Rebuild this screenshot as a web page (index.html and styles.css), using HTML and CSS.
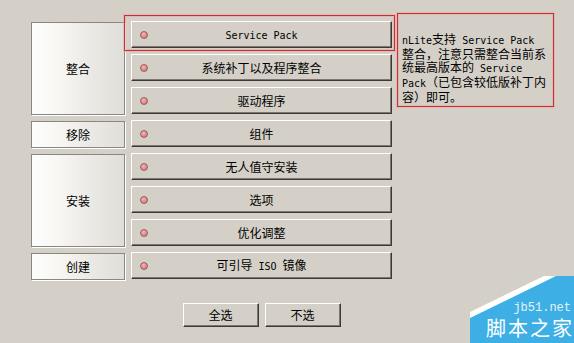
FILE: index.html
```html
<!DOCTYPE html>
<html lang="zh-CN">
<head>
<meta charset="utf-8">
<link rel="stylesheet" href="styles.css">
</head>
<body>
<div class="window">
  <div class="layout">
    <div class="grid">
      <div class="group g1">整合</div>
      <div class="btn r1"><span class="dot"></span><span class="lbl"><span class="m">Service Pack</span></span><span class="highlight"></span></div>
      <div class="btn r2"><span class="dot"></span><span class="lbl">系统补丁以及程序整合</span></div>
      <div class="btn r3"><span class="dot"></span><span class="lbl">驱动程序</span></div>
      <div class="group g2">移除</div>
      <div class="btn r4"><span class="dot"></span><span class="lbl">组件</span></div>
      <div class="group g3">安装</div>
      <div class="btn r5"><span class="dot"></span><span class="lbl">无人值守安装</span></div>
      <div class="btn r6"><span class="dot"></span><span class="lbl">选项</span></div>
      <div class="btn r7"><span class="dot"></span><span class="lbl">优化调整</span></div>
      <div class="group g4">创建</div>
      <div class="btn r8"><span class="dot"></span><span class="lbl">可引导<span class="m"> ISO </span>镜像</span></div>
      <div class="footer">
        <div class="fbtn">全选</div>
        <div class="fbtn">不选</div>
      </div>
    </div>
    <div class="info">
      <p class="info-text"><span class="m">nLite</span>支持<span class="m"> Service Pack</span><br>整合，注意只需整合当前系<br>统最高版本的<span class="m"> Service</span><br><span class="m">Pack</span>（已包含较低版补丁内<br>容）即可。</p>
    </div>
  </div>
  <div class="wm">
    <div class="wm-blue">
      <span class="wm-url">jb51.net</span>
      <span class="wm-name">脚本之家</span>
    </div>
  </div>
</div>
</body>
</html>
```
FILE: styles.css
```css
html, body {
  margin: 0;
  padding: 0;
}
body {
  background: #d4d0c8;
  font-family: "Noto Sans CJK SC", "Liberation Sans", sans-serif;
  font-size: 12px;
  color: #000;
}
.window {
  position: relative;
  width: 574px;
  height: 343px;
  overflow: hidden;
  background: #d4d0c8;
}
.layout {
  display: flex;
  align-items: flex-start;
  padding: 13px 0 0 31px;
}
.grid {
  margin-top: 8px;
  display: grid;
  grid-template-columns: 94px 261px;
  grid-template-rows: repeat(8, 27px) auto;
  column-gap: 6px;
  row-gap: 6px;
}
.m {
  font-family: "DejaVu Sans Mono", "Liberation Mono", monospace;
  font-size: 10px;
}
.group {
  grid-column: 1;
  margin: 1px 0 -1px 0;
  border: 1px solid #8a8680;
  box-shadow: 1px 1px 0 #ffffff;
  background: linear-gradient(90deg, #fdfdfc 0%, #f8f7f4 28%, #eeece8 55%, #e6e4df 80%, #e0ded8 100%);
  display: flex;
  align-items: center;
  justify-content: center;
  line-height: 14px;
}
.g1 { grid-row: 1 / 4; }
.g2 { grid-row: 4; }
.g3 { grid-row: 5 / 8; }
.g4 { grid-row: 8; }
.btn {
  grid-column: 2;
  position: relative;
  box-sizing: border-box;
  display: grid;
  grid-template-columns: 12px 1fr 12px;
  align-items: center;
  padding: 0 8px;
  background: #d4d0c8;
  border-top: 1px solid #ffffff;
  border-left: 1px solid #ffffff;
  border-right: 1px solid #3e3836;
  border-bottom: 1px solid #3e3836;
  box-shadow: inset -1px -1px 0 #7e7672;
  line-height: 14px;
}
.r1 { grid-row: 1; }
.r2 { grid-row: 2; }
.r3 { grid-row: 3; }
.r4 { grid-row: 4; }
.r5 { grid-row: 5; }
.r6 { grid-row: 6; }
.r7 { grid-row: 7; }
.r8 { grid-row: 8; }
.dot {
  grid-column: 1;
  width: 8px;
  height: 8px;
  border-radius: 50%;
  box-sizing: border-box;
  border: 1px solid #a45a5a;
  background: radial-gradient(circle at 40% 35%, #f0b8b6 0%, #d98d8c 55%, #c47372 100%);
}
.lbl {
  grid-column: 2;
  text-align: center;
  white-space: nowrap;
}
.highlight {
  position: absolute;
  left: -8px;
  top: -7px;
  right: -4px;
  bottom: -4px;
  border: 1px solid #b8383a;
  box-shadow: 0 0 0 1px rgba(240, 160, 160, 0.55), inset 0 0 0 1px rgba(240, 160, 160, 0.55);
  pointer-events: none;
}
.footer {
  grid-column: 2;
  grid-row: 9;
  margin-top: 18px;
  display: flex;
  justify-content: center;
  gap: 6px;
}
.fbtn {
  box-sizing: border-box;
  width: 76px;
  height: 24px;
  display: flex;
  align-items: center;
  justify-content: center;
  background: #d4d0c8;
  border-top: 1px solid #ffffff;
  border-left: 1px solid #ffffff;
  border-right: 1px solid #3e3836;
  border-bottom: 1px solid #3e3836;
  box-shadow: inset -1px -1px 0 #7e7672;
  line-height: 14px;
}
.info {
  margin-left: 5px;
  box-sizing: border-box;
  width: 157px;
  height: 94px;
  border: 1px solid #b8383a;
  box-shadow: 0 0 0 1px rgba(240, 160, 160, 0.55), inset 0 0 0 1px rgba(240, 160, 160, 0.55);
  padding: 18px 0 0 4px;
}
.info-text {
  margin: 0;
  white-space: nowrap;
  line-height: 13px;
  font-size: 12px;
}
.info-text .m {
  line-height: 13px;
}
.wm {
  position: absolute;
  right: 0;
  bottom: 0;
  width: 104px;
  height: 67px;
  background: #ffffff;
  clip-path: polygon(0 36px, 74px 0, 104px 0, 104px 67px, 0 67px);
}
.wm-blue {
  width: 100%;
  height: 100%;
  background: #3eafe5;
  clip-path: polygon(0 42px, 86px 0, 104px 0, 104px 67px, 0 67px);
  display: flex;
  flex-direction: column;
  align-items: flex-end;
  box-sizing: border-box;
  padding: 26px 3px 0 0;
}
.wm-url {
  font-family: "Liberation Mono", "DejaVu Sans Mono", monospace;
  font-size: 12px;
  line-height: 12px;
  color: #e4f3fb;
}
.wm-name {
  margin-top: 3px;
  font-family: "Noto Sans CJK SC", sans-serif;
  font-size: 20px;
  line-height: 22px;
  letter-spacing: 2px;
  color: #ffffff;
  margin-right: -3px;
  white-space: nowrap;
}
```
